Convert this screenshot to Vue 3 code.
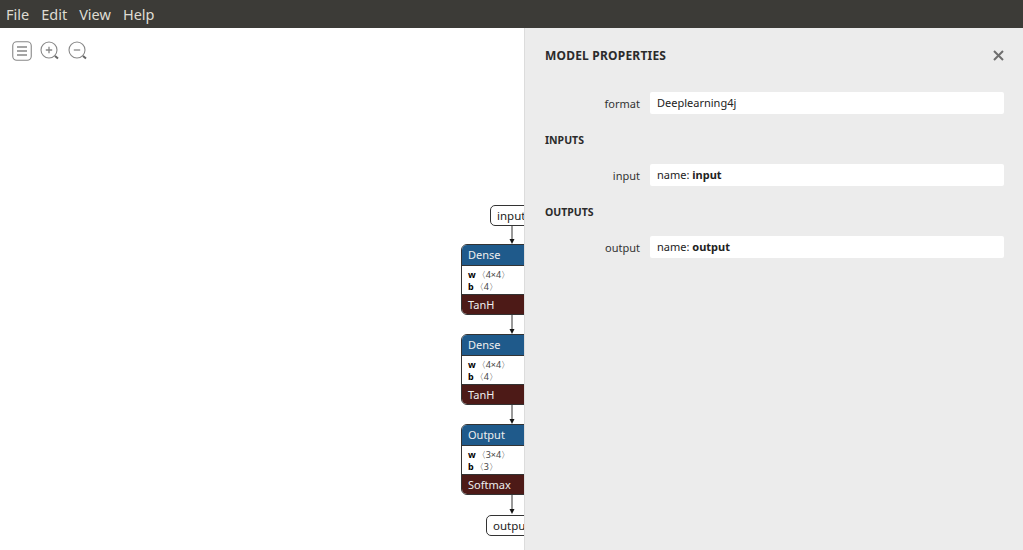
<script setup>
const menus = ['File', 'Edit', 'View', 'Help']
const nodes = [
  { title: 'Dense', w: '〈4×4〉', b: '〈4〉', act: 'TanH', top: 244 },
  { title: 'Dense', w: '〈4×4〉', b: '〈4〉', act: 'TanH', top: 334 },
  { title: 'Output', w: '〈3×4〉', b: '〈3〉', act: 'Softmax', top: 424 }
]
const arrows = [
  { y1: 225, y2: 244 }, { y1: 315, y2: 334 }, { y1: 405, y2: 424 }, { y1: 495, y2: 514 }
]
</script>

<template>
  <div class="app">
    <header class="menubar">
      <span v-for="m in menus" :key="m" class="menu">{{ m }}</span>
    </header>
    <main class="stage">
      <div class="tools">
        <svg width="20" height="20" viewBox="0 0 20 20" class="tool">
          <rect x="0.75" y="0.75" width="18.5" height="18.5" rx="4" fill="#fff" stroke="#888" stroke-width="1.1" />
          <path d="M5 6h10M5 10h10M5 14h10" stroke="#888" stroke-width="1.4" fill="none" />
        </svg>
        <svg width="20" height="20" viewBox="0 0 20 20" class="tool t2">
          <circle cx="9" cy="9" r="8" fill="#fff" stroke="#888" stroke-width="1.1" />
          <path d="M5.8 9h6.4M9 5.8v6.4" stroke="#888" stroke-width="1.3" fill="none" />
          <path d="M15 15l3 2.6" stroke="#666" stroke-width="2" fill="none" />
        </svg>
        <svg width="20" height="20" viewBox="0 0 20 20" class="tool t2">
          <circle cx="9" cy="9" r="8" fill="#fff" stroke="#888" stroke-width="1.1" />
          <path d="M5.8 9h6.4" stroke="#888" stroke-width="1.3" fill="none" />
          <path d="M15 15l3 2.6" stroke="#666" stroke-width="2" fill="none" />
        </svg>
      </div>

      <div class="graph">
        <svg class="wires" width="1023" height="550">
          <g v-for="a in arrows" :key="a.y1">
            <line x1="512" x2="512" :y1="a.y1" :y2="a.y2 - 4" stroke="#333" stroke-width="1" />
            <path :d="`M509.5 ${a.y2 - 5}h5L512 ${a.y2}z`" fill="#111" />
          </g>
        </svg>
        <div class="pill input-pill">input</div>
        <div v-for="n in nodes" :key="n.top" class="node" :style="{ top: n.top + 'px' }">
          <div class="node-title">{{ n.title }}</div>
          <div class="node-body">
            <div class="row"><b>w</b><span class="shape">{{ n.w }}</span></div>
            <div class="row"><b>b</b><span class="shape">{{ n.b }}</span></div>
          </div>
          <div class="node-act">{{ n.act }}</div>
        </div>
        <div class="pill output-pill">output</div>
      </div>

      <aside class="panel">
        <div class="panel-head">
          <h1>MODEL PROPERTIES</h1>
          <svg class="close" width="11" height="11" viewBox="0 0 11 11">
            <path d="M1 1l9 9M10 1l-9 9" stroke="#6e6e6e" stroke-width="2" fill="none" />
          </svg>
        </div>
        <div class="prop first">
          <label>format</label>
          <div class="value">Deeplearning4j</div>
        </div>
        <h2>INPUTS</h2>
        <div class="prop">
          <label>input</label>
          <div class="value">name: <b>input</b></div>
        </div>
        <h2>OUTPUTS</h2>
        <div class="prop">
          <label>output</label>
          <div class="value">name: <b>output</b></div>
        </div>
      </aside>
    </main>
  </div>
</template>

<style>
html, body { margin: 0; overflow: hidden; background: #fff; }
</style>

<style scoped>
.app {
  width: 1023px;
  height: 550px;
  display: flex;
  flex-direction: column;
  font-family: "Noto Sans", "Open Sans", sans-serif;
  overflow: hidden;
}
.menubar {
  height: 28px;
  flex: none;
  background: #3c3b37;
  display: flex;
  align-items: center;
  gap: 12px;
  padding: 0 6px;
  color: #dfdbd2;
  font-size: 14.5px;
}
.stage {
  position: relative;
  flex: 1;
  background: #fff;
  overflow: hidden;
  display: flex;
  justify-content: flex-end;
}
.tools {
  position: absolute;
  left: 12px;
  top: 13px;
  display: flex;
  gap: 8px;
}
.t2 { margin-left: 0; }
.graph { position: absolute; left: 0; top: -28px; width: 1023px; height: 550px; }
.wires { position: absolute; left: 0; top: 0; }
.pill {
  position: absolute;
  height: 19px;
  line-height: 19px;
  box-sizing: content-box;
  border: 1px solid #333;
  border-radius: 5px;
  background: #fff;
  color: #222;
  font-size: 11.5px;
  padding: 0 6px;
}
.input-pill { left: 490px; top: 205px; width: 60px; }
.output-pill { left: 486px; top: 515px; width: 60px; }
.node {
  position: absolute;
  left: 461px;
  width: 100px;
  height: 71px;
  box-sizing: border-box;
  border-radius: 6px;
  border: 1px solid #333;
  overflow: hidden;
  background: #fff;
  display: flex;
  flex-direction: column;
}
.node-title {
  height: 20px;
  line-height: 20px;
  background: #1f5a8b;
  color: #eee;
  font-size: 11px;
  padding: 0 6px;
  border-bottom: 1px solid #333;
}
.node-body {
  flex: 1;
  padding: 3px 6px 0;
  font-size: 9px;
  line-height: 12px;
  color: #222;
}
.row { display: flex; }
.row b { color: #000; margin-right: 1px; }
.shape { color: #444; }
.node-act {
  height: 19px;
  line-height: 19px;
  background: #4d1a17;
  color: #eee;
  font-size: 11px;
  padding: 0 6px;
  border-top: 1px solid #333;
}
.panel {
  position: relative;
  z-index: 2;
  width: 499px;
  flex: none;
  background: #ececec;
  border-left: 1px solid #dcdcdc;
  padding: 0 19px 0 20px;
  box-sizing: border-box;
  color: #2b2b2b;
}
.panel-head {
  display: flex;
  justify-content: space-between;
  align-items: center;
  height: 54px;
}
.panel-head h1 {
  margin: 0;
  font-size: 12px;
  font-weight: 700;
  letter-spacing: 0.2px;
  color: #2b2b2b;
}
.close { margin-right: 0; }
.prop {
  display: flex;
  align-items: center;
  gap: 10px;
  margin-top: 16px;
}
.prop.first { margin-top: 10px; }
.prop label {
  width: 95px;
  text-align: right;
  font-size: 11px;
  color: #333;
}
.value {
  flex: 1;
  height: 22px;
  line-height: 22px;
  background: #fff;
  border-radius: 2px;
  padding: 0 7px;
  font-size: 11px;
  color: #222;
}
h2 {
  margin: 18px 0 0;
  font-size: 10.5px;
  font-weight: 700;
  line-height: 16px;
  color: #2b2b2b;
}
</style>
